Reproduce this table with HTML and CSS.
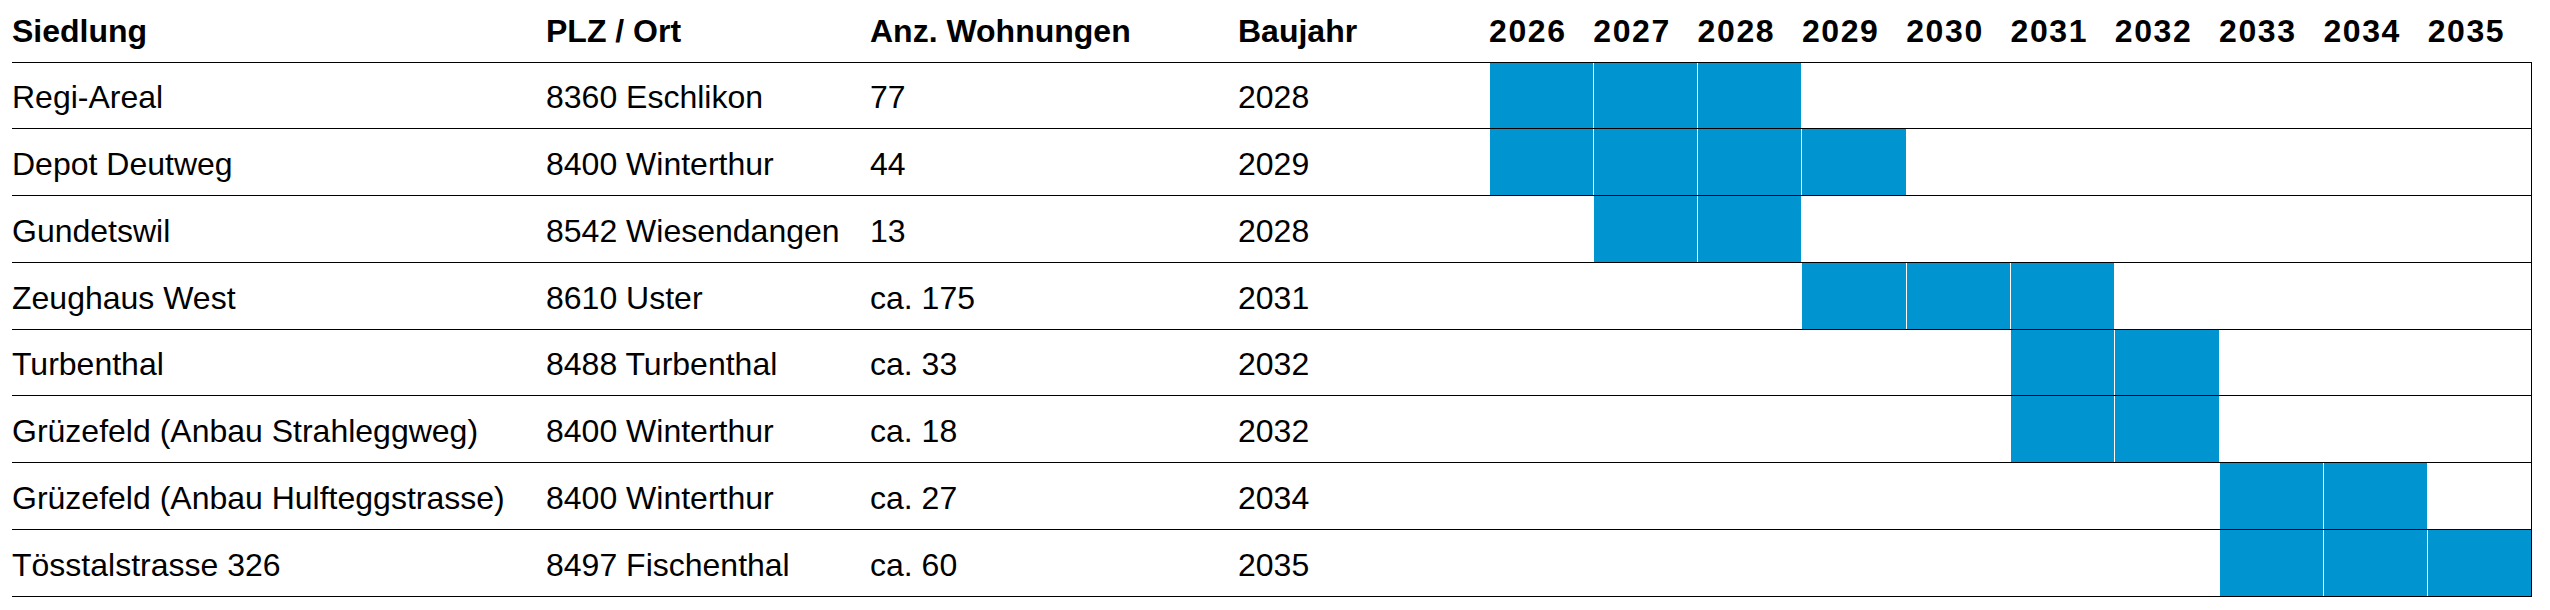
FILE: index.html
```html
<!DOCTYPE html>
<html lang="de">
<head>
<meta charset="utf-8">
<title>Siedlungen</title>
<link rel="stylesheet" href="styles.css">
</head>
<body>
<table class="plan">
  <colgroup>
    <col class="c-name"><col class="c-ort"><col class="c-anz"><col class="c-jahr">
    <col class="c-y"><col class="c-y"><col class="c-y"><col class="c-y"><col class="c-y">
    <col class="c-y"><col class="c-y"><col class="c-y"><col class="c-y"><col class="c-y">
  </colgroup>
  <thead>
    <tr>
      <th>Siedlung</th><th>PLZ / Ort</th><th>Anz. Wohnungen</th><th>Baujahr</th>
      <th class="yr">2026</th><th class="yr">2027</th><th class="yr">2028</th><th class="yr">2029</th><th class="yr">2030</th>
      <th class="yr">2031</th><th class="yr">2032</th><th class="yr">2033</th><th class="yr">2034</th><th class="yr">2035</th>
    </tr>
  </thead>
  <tbody>
    <tr>
      <td>Regi-Areal</td><td>8360 Eschlikon</td><td>77</td><td>2028</td>
      <td class="g on"></td><td class="g on"></td><td class="g on"></td><td class="g"></td><td class="g"></td>
      <td class="g"></td><td class="g"></td><td class="g"></td><td class="g"></td><td class="g last"></td>
    </tr>
    <tr>
      <td>Depot Deutweg</td><td>8400 Winterthur</td><td>44</td><td>2029</td>
      <td class="g on"></td><td class="g on"></td><td class="g on"></td><td class="g on"></td><td class="g"></td>
      <td class="g"></td><td class="g"></td><td class="g"></td><td class="g"></td><td class="g last"></td>
    </tr>
    <tr>
      <td>Gundetswil</td><td>8542 Wiesendangen</td><td>13</td><td>2028</td>
      <td class="g"></td><td class="g on"></td><td class="g on"></td><td class="g"></td><td class="g"></td>
      <td class="g"></td><td class="g"></td><td class="g"></td><td class="g"></td><td class="g last"></td>
    </tr>
    <tr>
      <td>Zeughaus West</td><td>8610 Uster</td><td>ca. 175</td><td>2031</td>
      <td class="g"></td><td class="g"></td><td class="g"></td><td class="g on"></td><td class="g on"></td>
      <td class="g on"></td><td class="g"></td><td class="g"></td><td class="g"></td><td class="g last"></td>
    </tr>
    <tr>
      <td>Turbenthal</td><td>8488 Turbenthal</td><td>ca. 33</td><td>2032</td>
      <td class="g"></td><td class="g"></td><td class="g"></td><td class="g"></td><td class="g"></td>
      <td class="g on"></td><td class="g on"></td><td class="g"></td><td class="g"></td><td class="g last"></td>
    </tr>
    <tr>
      <td>Grüzefeld (Anbau Strahleggweg)</td><td>8400 Winterthur</td><td>ca. 18</td><td>2032</td>
      <td class="g"></td><td class="g"></td><td class="g"></td><td class="g"></td><td class="g"></td>
      <td class="g on"></td><td class="g on"></td><td class="g"></td><td class="g"></td><td class="g last"></td>
    </tr>
    <tr>
      <td>Grüzefeld (Anbau Hulfteggstrasse)</td><td>8400 Winterthur</td><td>ca. 27</td><td>2034</td>
      <td class="g"></td><td class="g"></td><td class="g"></td><td class="g"></td><td class="g"></td>
      <td class="g"></td><td class="g"></td><td class="g on"></td><td class="g on"></td><td class="g last"></td>
    </tr>
    <tr>
      <td>Tösstalstrasse 326</td><td>8497 Fischenthal</td><td>ca. 60</td><td>2035</td>
      <td class="g"></td><td class="g"></td><td class="g"></td><td class="g"></td><td class="g"></td>
      <td class="g"></td><td class="g"></td><td class="g on"></td><td class="g on"></td><td class="g on last"></td>
    </tr>
  </tbody>
</table>
</body>
</html>
```
FILE: styles.css
```css
html, body {
  margin: 0;
  padding: 0;
  background: #fff;
}

body {
  font-family: "Liberation Sans", Arial, sans-serif;
  color: #000;
}

.plan {
  margin-left: 12px;
  width: 2520px;
  table-layout: fixed;
  border-collapse: collapse;
  border-spacing: 0;
  font-size: 32px;
  line-height: 36px;
}

.c-name { width: 534px; }
.c-ort { width: 324px; }
.c-anz { width: 368px; }
.c-jahr { width: 251px; }
.c-y { width: 104.3px; }

.plan th {
  height: 62px;
  padding: 13px 0 0 0;
  box-sizing: border-box;
  text-align: left;
  vertical-align: top;
  font-weight: 700;
  white-space: nowrap;
  border-bottom: 1px solid #000;
}

.plan th.yr {
  letter-spacing: 1.6px;
}

.plan td {
  height: 61.75px;
  padding: 4px 0 0 0;
  vertical-align: middle;
  text-align: left;
  white-space: nowrap;
  border-bottom: 1px solid #000;
}

.plan td.g {
  border-left: 1px solid #fff;
}

.plan td.on {
  background: #0094d0;
}

.plan td.last {
  border-right: 1px solid #000;
}
```
